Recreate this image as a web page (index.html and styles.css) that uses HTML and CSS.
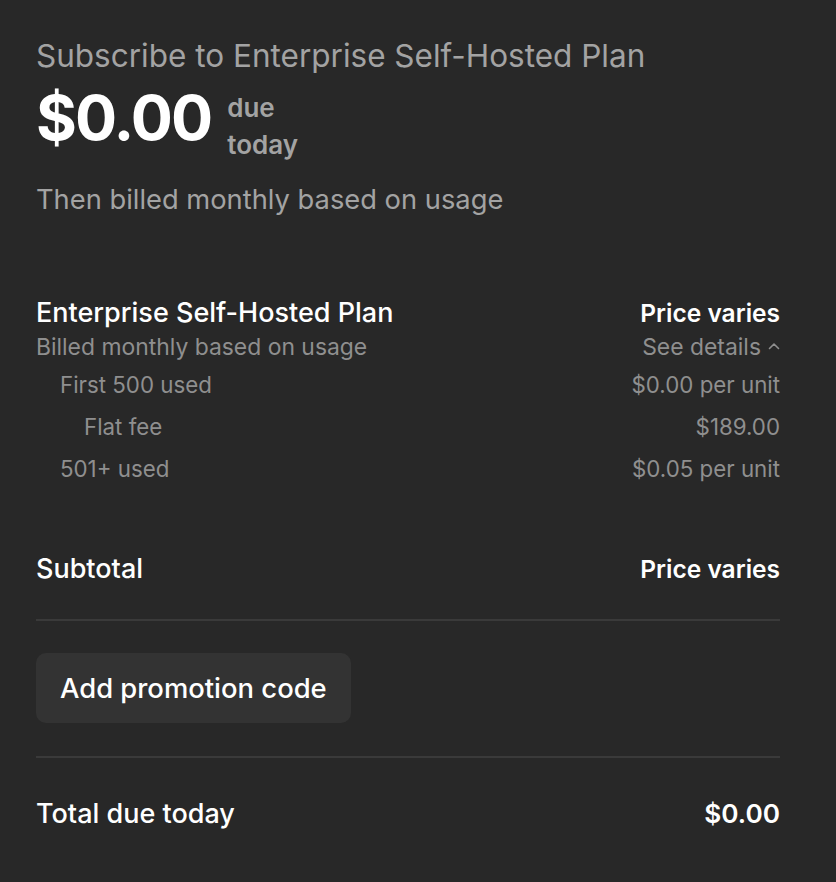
FILE: index.html
```html
<!DOCTYPE html>
<html lang="en">
<head>
<meta charset="utf-8">
<title>Order summary</title>
<link rel="stylesheet" href="styles.css">
</head>
<body>
<main class="summary">
  <header class="head">
    <div class="title">Subscribe to Enterprise Self-Hosted Plan</div>
    <div class="amount-row">
      <span class="amount">$0.00</span>
      <span class="due">due<br>today</span>
    </div>
    <div class="then">Then billed monthly based on usage</div>
  </header>

  <section class="item">
    <div class="row">
      <span class="name">Enterprise Self-Hosted Plan</span>
      <span class="price">Price varies</span>
    </div>
    <div class="row sub">
      <span>Billed monthly based on usage</span>
      <span class="details">See details
        <svg class="chev" width="12" height="8" viewBox="0 0 12 8"><path d="M1.5 6.5 L6 2 L10.5 6.5" fill="none" stroke="currentColor" stroke-width="1.6" stroke-linecap="round" stroke-linejoin="round"/></svg>
      </span>
    </div>
    <div class="tiers">
      <div class="row tier"><span class="lvl1">First 500 used</span><span>$0.00 per unit</span></div>
      <div class="row tier"><span class="lvl2">Flat fee</span><span>$189.00</span></div>
      <div class="row tier"><span class="lvl1">501+ used</span><span>$0.05 per unit</span></div>
    </div>
  </section>

  <div class="row subtotal">
    <span class="name">Subtotal</span>
    <span class="price">Price varies</span>
  </div>
  <hr class="divider">
  <button class="promo">Add promotion code</button>
  <hr class="divider">
  <div class="row total">
    <span class="name">Total due today</span>
    <span class="price total-amount">$0.00</span>
  </div>
</main>
</body>
</html>
```

FILE: styles.css
```css
html, body {
  margin: 0;
  padding: 0;
  background: #282828;
}
body {
  font-family: Inter, "Liberation Sans", sans-serif;
  color: #ffffff;
  -webkit-font-smoothing: antialiased;
}
.summary {
  padding: 38px 56px 40px 36px;
  display: flex;
  flex-direction: column;
}
.title {
  font-size: 31.5px;
  line-height: 36px;
  color: #a3a3a3;
  font-weight: 400;
}
.amount-row {
  display: flex;
  align-items: flex-start;
  gap: 16px;
  margin-top: 8px;
}
.amount {
  font-size: 62.5px;
  line-height: 70px;
  font-weight: 700;
  letter-spacing: -0.03em;
}
.due {
  margin-top: 7px;
  font-size: 26px;
  line-height: 37px;
  font-weight: 600;
  color: #a3a3a3;
}
.then {
  font-size: 27.3px;
  line-height: 34px;
  color: #a3a3a3;
  margin-top: 20px;
}
.item {
  margin-top: 79px;
}
.row {
  display: flex;
  justify-content: space-between;
  align-items: center;
}
.name {
  font-size: 27px;
  line-height: 34px;
  font-weight: 500;
}
.price {
  font-size: 24.5px;
  line-height: 34px;
  font-weight: 600;
}
.total-amount {
  font-size: 26.2px;
}
.sub {
  font-size: 22.9px;
  line-height: 34px;
  color: #8f8f8f;
}
.details {
  display: flex;
  align-items: center;
  gap: 7px;
}
.chev {
  margin-top: -2px;
}
.tier {
  font-size: 22.3px;
  line-height: 42px;
  color: #8f8f8f;
}
.lvl1 { padding-left: 24px; }
.lvl2 { padding-left: 48px; }
.subtotal {
  margin-top: 62px;
}
.divider {
  border: none;
  height: 2px;
  background: #3a3a3a;
  margin: 0;
}
.subtotal + .divider {
  margin-top: 33px;
}
.promo {
  align-self: flex-start;
  margin-top: 32px;
  margin-bottom: 33px;
  background: #333333;
  border: none;
  border-radius: 10px;
  height: 70px;
  padding: 0 24px;
  color: #ffffff;
  font-family: inherit;
  font-size: 27.4px;
  font-weight: 500;
}
.total {
  margin-top: 39px;
}
```
